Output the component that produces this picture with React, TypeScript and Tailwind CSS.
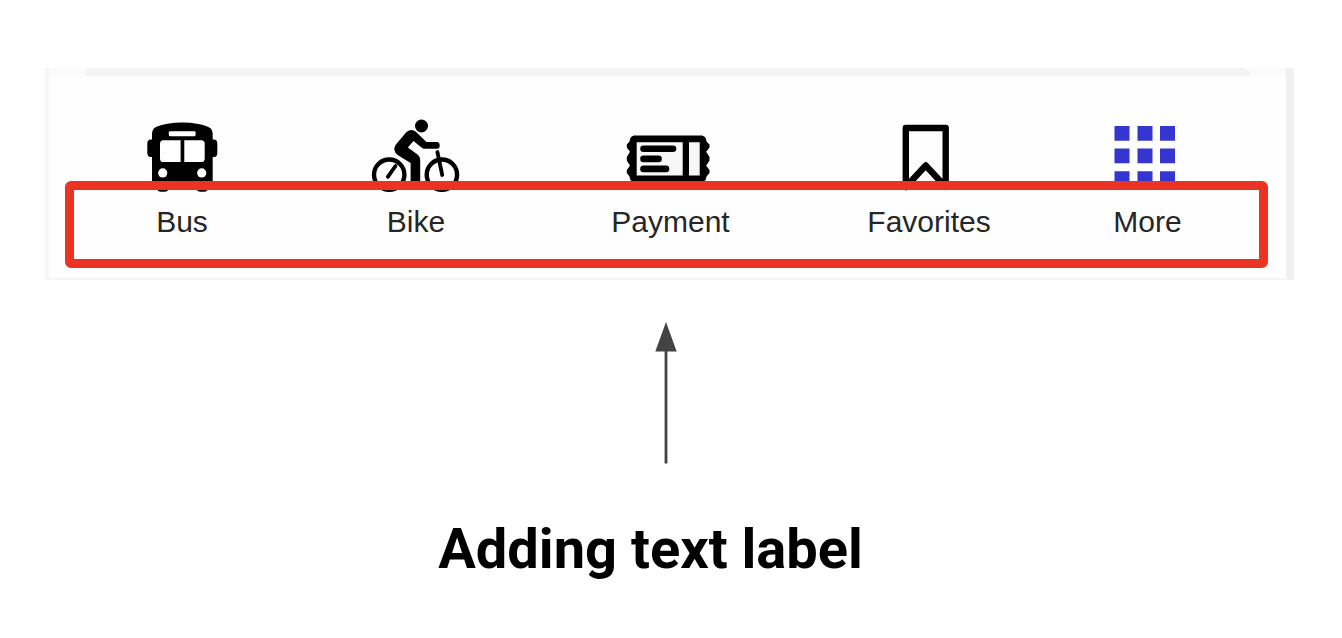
import type { ReactNode } from "react";

function Glyph({ children }: { children: ReactNode }) {
  return (
    <svg viewBox="0 0 92 80" className="h-20 w-[92px]" fill="black" aria-hidden="true">
      {children}
    </svg>
  );
}

function BusIcon() {
  return (
    <Glyph>
      <path d="M16 70V19Q16 14 20 12Q30 7.500 46.300 7.500T72.500 12Q76.700 14 76.700 19V70Z" />
      <path d="M17 24.500H15Q11.300 24.500 11.300 28.500V38Q11.300 42 15 42H17ZM76 24.500H78Q81.300 24.500 81.300 28.500V38Q81.300 42 78 42H76Z" />
      <path d="M21.300 68H32.300V73.500Q32.300 76.800 28.500 76.800H25Q21.300 76.800 21.300 73.500ZM60.700 68H71.700V73.500Q71.700 76.800 68 76.800H64.500Q60.700 76.800 60.700 73.500Z" />
      <g fill="white">
        <rect x="32.800" y="16.300" width="26.800" height="5" rx="1.300" />
        <path d="M44.600 25.200V47H27.500Q24 47 24 43.400V28.800Q24 25.200 27.500 25.200ZM48.300 25.200V47H65.200Q68.700 47 68.700 43.400V28.800Q68.700 25.200 65.200 25.200Z" />
        <circle cx="26.700" cy="57.900" r="4.600" />
        <circle cx="65.700" cy="57.900" r="4.600" />
      </g>
    </Glyph>
  );
}

function BikeIcon() {
  return (
    <Glyph>
      <circle cx="51.500" cy="11" r="6.500" />
      <g fill="none" stroke="black" strokeWidth="4.400" strokeLinecap="round">
        <circle cx="19.200" cy="59.700" r="15.200" />
        <circle cx="71.900" cy="59.700" r="15.200" />
        <path strokeWidth="3.800" d="M25.500 51L17.800 61.800M67.400 37L72.200 60" />
      </g>
      <path d="M36.500 17Q41.500 13 45.800 16.700L56.500 27H67Q69.700 27.200 69.700 30.400T67 33.800H54.500Q53 33.800 51.500 32.500L43.500 26L37.900 32.500L47.500 39.400Q50.200 41.400 50.200 45V67H40.600V48L28 40.300Q22 35.700 25.700 29.700Z" />
    </Glyph>
  );
}

function TicketIcon() {
  return (
    <Glyph>
      <path d="M9 20.500H77Q81 21.200 81.500 26.500L84.500 29.500V32.500L81.200 36.800L84.500 42V45.500L81.200 50.700L84.500 55V58L81.500 61.500Q81 66.800 77 67.300H9Q5 66.800 4.500 61.500L1.800 58V55L5 50.700L1.800 45.500V42L5 36.800L1.800 32.500V29.500L4.500 26.500Q5 21.200 9 20.500Z" />
      <path fill="#f7f7f7" d="M11.700 27.300H57.700V60.500H11.700ZM64 27.300H74.700V60.500H64Z" />
      <path stroke="black" strokeWidth="6.600" strokeLinecap="round" d="M18.500 33.800H48M18.500 43.900H33.500M18.500 53.900H41" />
    </Glyph>
  );
}

function BookmarkIcon() {
  return (
    <Glyph>
      <path
        fill="none"
        stroke="black"
        strokeWidth="6.400"
        strokeLinejoin="round"
        d="M22.800 72V13H62.700V72L42.700 50.500Z"
      />
    </Glyph>
  );
}

function GridIcon() {
  return (
    <Glyph>
      <path
        fill="#3535cf"
        d="M12.500 11h15v14.700h-15zM35.500 11h15v14.700h-15zM58 11h15v14.700h-15zM12.500 33.600h15v14.700h-15zM35.500 33.600h15v14.700h-15zM58 33.600h15v14.700h-15zM12.500 56.200h15v14.700h-15zM35.500 56.200h15v14.700h-15zM58 56.200h15v14.700h-15z"
      />
    </Glyph>
  );
}

const tabs = [
  { label: "Bus", icon: <BusIcon /> },
  { label: "Bike", icon: <BikeIcon /> },
  { label: "Payment", icon: <TicketIcon /> },
  { label: "Favorites", icon: <BookmarkIcon /> },
  { label: "More", icon: <GridIcon /> },
];

export default function App() {
  return (
    <main className="min-h-screen bg-white pt-[68px] pr-12 pl-[45px]">
      <div className="relative border-r-8 border-b-2 border-l-4 border-r-[#f1f1f1] border-b-[#f5f5f5] border-l-[#f6f6f6] bg-[#fefefe] pb-[37px]">
        <div className="bg-[#fbfbfb] px-9">
          <div className="h-2 rounded-t-lg bg-[#f4f4f4]" />
        </div>
        <nav
          aria-label="Main"
          className="grid grid-cols-[228fr_240fr_269fr_248fr_189fr] pt-[39px] pr-11 pl-[19px]"
        >
          {tabs.map((tab) => (
            <button key={tab.label} type="button" className="flex flex-col items-center gap-2">
              {tab.icon}
              <span className="font-['Liberation_Sans',Arial,sans-serif] text-[30px] leading-[38px] text-[#262626]">
                {tab.label}
              </span>
            </button>
          ))}
        </nav>
        <div className="pointer-events-none absolute top-[113px] right-[18px] bottom-[10px] left-4 rounded-md border-9 border-[#eb3323]" />
      </div>
      <div className="flex flex-col items-center pt-[42px]">
        <svg viewBox="0 0 22 142" className="mr-2 h-[142px] w-[22px]" fill="#434343" aria-hidden="true">
          <path d="M11 0L21.700 29.500H12.400V141.500H9.600V29.500H.300Z" />
        </svg>
        <h1 className="mt-[53px] mr-[38px] text-center font-[Roboto,sans-serif] text-[56px] leading-[64px] font-bold text-black">
          Adding text label
        </h1>
      </div>
    </main>
  );
}
